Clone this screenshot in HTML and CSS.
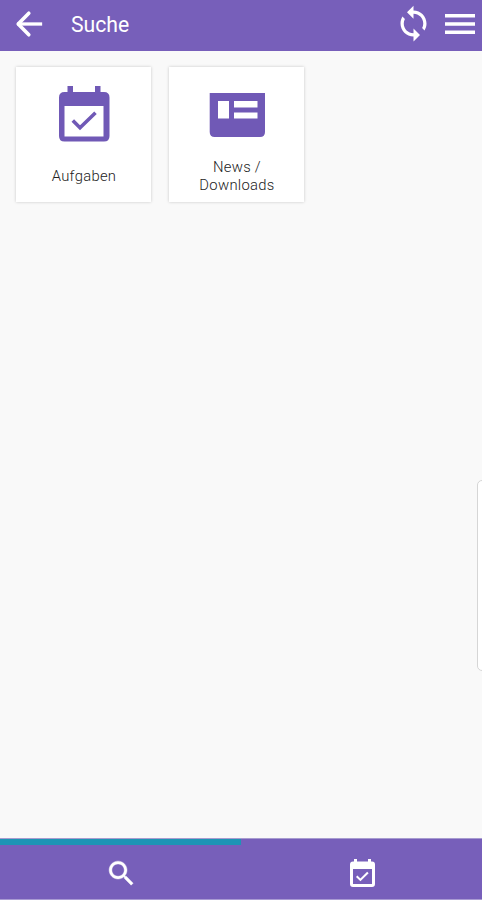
FILE: index.html
```html
<!DOCTYPE html>
<html lang="de">
<head>
<meta charset="utf-8">
<title>Suche</title>
<link rel="stylesheet" href="styles.css">
</head>
<body>
<header class="topbar">
  <svg class="back" viewBox="0 0 28 28" fill="none" stroke="currentColor" stroke-width="3.6" stroke-linecap="round" stroke-linejoin="round"><path d="M13.8 3.2 3.2 14l10.6 10.8"/><path d="M4 14h21.5" stroke-linecap="square" stroke-width="3.3"/></svg>
  <h1 class="title">Suche</h1>
  <svg class="sync" viewBox="0 0 24 24" fill="currentColor"><path d="M12 4V1L8 5l4 4V6c3.31 0 6 2.69 6 6 0 1.01-.25 1.97-.7 2.8l1.46 1.46C19.54 15.03 20 13.57 20 12c0-4.42-3.58-8-8-8zm0 14c-3.31 0-6-2.69-6-6 0-1.01.25-1.97.7-2.8L5.24 7.74C4.46 8.97 4 10.43 4 12c0 4.42 3.58 8 8 8v3l4-4-4-4v3z"/></svg>
  <svg class="menu" viewBox="0 0 30 20" fill="currentColor"><path d="M0 0h30v3.6H0zM0 8.2h30v3.6H0zM0 16.4h30V20H0z"/></svg>
</header>
<main class="content">
  <a class="tile">
    <svg class="tile-icon" viewBox="0 0 56 56"><path fill="currentColor" fill-rule="evenodd" d="M11.5 0H17v6h22V0h5.500v6H48q5.500 0 5.500 5.500V50q0 5.500-5.500 5.500H8.500Q3 55.500 3 50V11.500Q3 6 8.500 6h3zM8.500 20v30.500h39V20z"/><path fill="none" stroke="currentColor" stroke-width="3.600" d="m16.800 34.500 7.200 7.200 15.500-15"/></svg>
    <span class="label">Aufgaben</span>
  </a>
  <a class="tile two-line">
    <svg class="tile-icon" viewBox="0 0 56 56"><path fill="currentColor" fill-rule="evenodd" d="M.7 7h55.300v39q0 5-5 5H5.700q-5 0-5-5zM9 15v17.500h11V15zm16 0v6.500h23.500V15zm0 11.500v6h23.500v-6z"/></svg>
    <span class="label">News /<br>Downloads</span>
  </a>
  <div class="drawer"></div>
</main>
<nav class="tabs">
  <a class="tab active"><svg class="search" viewBox="0 0 24 24" fill="currentColor" stroke="currentColor" stroke-width=".3"><path d="M15.500 14h-.79l-.28-.27C15.410 12.590 16 11.110 16 9.500 16 5.910 13.090 3 9.500 3S3 5.910 3 9.500 5.910 16 9.500 16c1.610 0 3.090-.59 4.230-1.570l.27.28v.79l5 4.990L20.490 19zm-6 0C7.010 14 5 11.990 5 9.500S7.010 5 9.500 5 14 7.010 14 9.500 11.990 14 9.500 14z"/></svg></a>
  <a class="tab"><svg class="calendar" viewBox="0 0 25 28"><path fill="currentColor" fill-rule="evenodd" d="M4 0h3v2.500h11V0h3v2.500h1q3 0 3 3V25q0 3-3 3H3q-3 0-3-3V5.500q0-3 3-3h1zM3 10v15h19V10z"/><path fill="none" stroke="currentColor" stroke-width="2.100" d="m6.700 17.300 3.700 3.600 7.500-7.400"/></svg></a>
</nav>
</body>
</html>
```
FILE: styles.css
```css
* { box-sizing: border-box; }
body {
  margin: 0;
  height: 900px;
  display: flex;
  flex-direction: column;
  overflow: hidden;
  background: #f9f9f9;
  font-family: Roboto, sans-serif;
}
.topbar {
  height: 51px;
  flex: none;
  display: flex;
  align-items: center;
  padding: 0 7px 3px 15px;
  background: #775fba;
  color: #fff;
}
.back { width: 28px; height: 28px; }
.title {
  margin: 0 auto 0 28px;
  padding-top: 2px;
  font-size: 21.2px;
  font-weight: 400;
  line-height: 28px;
}
.sync { width: 39px; height: 39px; margin: 0 12px 2px 0; }
.menu { width: 30px; height: 20px; }
.content {
  position: relative;
  flex: 1;
  display: flex;
  align-items: flex-start;
  gap: 18px;
  padding: 16px;
}
.tile {
  width: 135px;
  height: 135px;
  display: flex;
  flex-direction: column;
  align-items: center;
  padding-top: 19px;
  background: #fff;
  box-shadow: 0 0 3px rgba(0, 0, 0, .2);
  color: #7059b6;
}
.tile-icon { width: 56px; height: 56px; }
.label {
  margin-top: 25px;
  padding-left: 1px;
  font-size: 14.8px;
  font-weight: 300;
  line-height: 18px;
  letter-spacing: .3px;
  text-align: center;
  color: #222;
}
.two-line .label { margin-top: 16px; }
.drawer {
  position: absolute;
  top: 429px;
  right: -10px;
  width: 15px;
  height: 191px;
  border: 1px solid #d6d6d6;
  border-radius: 5px;
  background: #fff;
}
.tabs {
  height: 62px;
  flex: none;
  display: flex;
  background: #775fba;
  border-top: 1px solid #a79bd0;
  border-bottom: 1px solid #a99bd3;
  color: #fff;
}
.tab {
  flex: 1;
  display: flex;
  align-items: center;
  justify-content: center;
  padding: 8px 0 0 2px;
}
.active { box-shadow: inset 0 6px #1e94b5; }
.search { width: 33px; height: 33px; }
.calendar { width: 25px; height: 28px; }
```
